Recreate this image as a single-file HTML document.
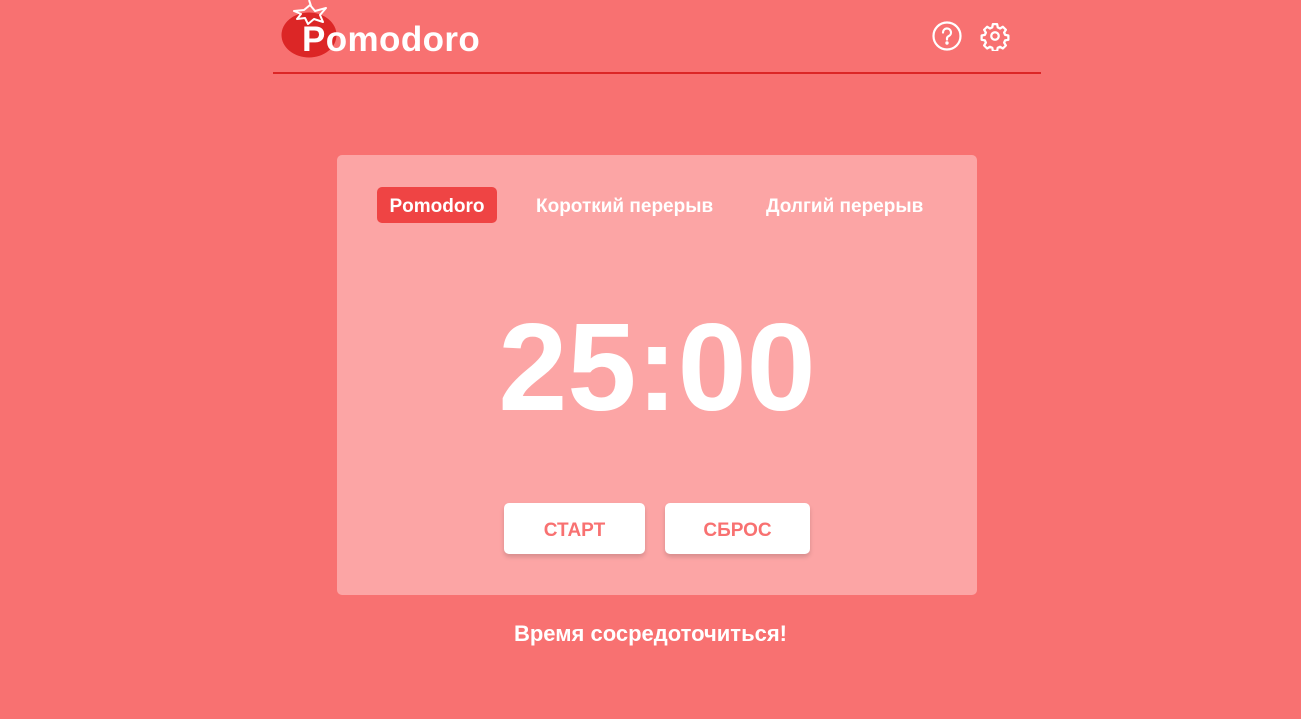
<!DOCTYPE html>
<html><head><meta charset="utf-8"><style>
*{margin:0;padding:0;box-sizing:border-box}
body{width:1301px;height:719px;background:#f87171;font-family:"Liberation Sans","DejaVu Sans",sans-serif;position:relative;overflow:hidden;color:#fff}
.abs{position:absolute}
.line{left:273px;top:72px;width:768px;height:2px;background:#dc2626}
.logo{left:302px;top:20px;font-size:35px;font-weight:bold;letter-spacing:0.4px}
.card{left:337px;top:155px;width:640px;height:440px;background:#fca5a5;border-radius:5px}
.tab{font-size:19px;font-weight:bold;top:187px;height:36px;line-height:40px}
.act{left:377px;width:120px;background:#ef4444;border-radius:5px;text-align:center}
.timer{left:337px;width:640px;text-align:center;top:298px;font-size:124px;font-weight:bold;line-height:140px}
.btn{top:503px;height:51px;background:#fff;border-radius:5px;color:#f87171;font-weight:bold;font-size:19px;text-align:center;line-height:56px;box-shadow:0 3px 5px rgba(0,0,0,0.15)}
.msg{left:0;width:1301px;text-align:center;top:620px;font-size:22px;font-weight:bold;line-height:28px}
</style></head><body>
<svg class="abs" style="left:276px;top:0" width="70" height="62" viewBox="0 0 70 62">
<ellipse cx="33" cy="35" rx="27.5" ry="22.5" fill="#dc2626"/>
<path d="M33 0 L35 6 M18 11 L28 10 L34 5 L39 11 L50 8 L44 15 L47 22 L38 19 L32 24 L29 18 L21 19 L25 14 Z" fill="none" stroke="#fff" stroke-width="2" stroke-linejoin="round"/>
</svg>
<div class="abs logo">Pomodoro</div>
<svg class="abs" style="left:932px;top:21px" width="30" height="30" viewBox="0 0 30 30" fill="none" stroke="#fff" stroke-width="2.2" stroke-linecap="round">
<circle cx="15" cy="15" r="13.5"/><path d="M11 11.5 a4 4 0 1 1 5.5 3.7 c-1 .5 -1.5 1.2 -1.5 2.3 v1"/><circle cx="15" cy="22" r="0.6" fill="#fff"/>
</svg>
<svg class="abs" style="left:980px;top:21px" width="30" height="30" viewBox="0 0 24 24" fill="none" stroke="#fff" stroke-width="1.8" stroke-linejoin="round">
<path d="M10.3 2.5h3.4l.5 2.6 1.8.9 2.3-1.4 2.4 2.4-1.4 2.3.8 1.8 2.6.5v3.4l-2.6.5-.8 1.8 1.4 2.3-2.4 2.4-2.3-1.4-1.8.8-.5 2.6h-3.4l-.5-2.6-1.8-.8-2.300 1.4-2.4-2.4 1.4-2.3-.8-1.8-2.6-.5v-3.4l2.6-.5.8-1.8-1.4-2.3 2.4-2.4 2.3 1.4 1.8-.9z"/><circle cx="12" cy="12" r="3"/>
</svg>
<div class="abs line"></div>
<div class="abs card"></div>
<div class="abs tab act">Pomodoro</div>
<div class="abs tab" style="left:536px">Короткий перерыв</div>
<div class="abs tab" style="left:766px">Долгий перерыв</div>
<div class="abs timer">25:00</div>
<div class="abs btn" style="left:504px;width:141px">СТАРТ</div>
<div class="abs btn" style="left:665px;width:145px">СБРОС</div>
<div class="abs msg">Время сосредоточиться!</div>
</body></html>
